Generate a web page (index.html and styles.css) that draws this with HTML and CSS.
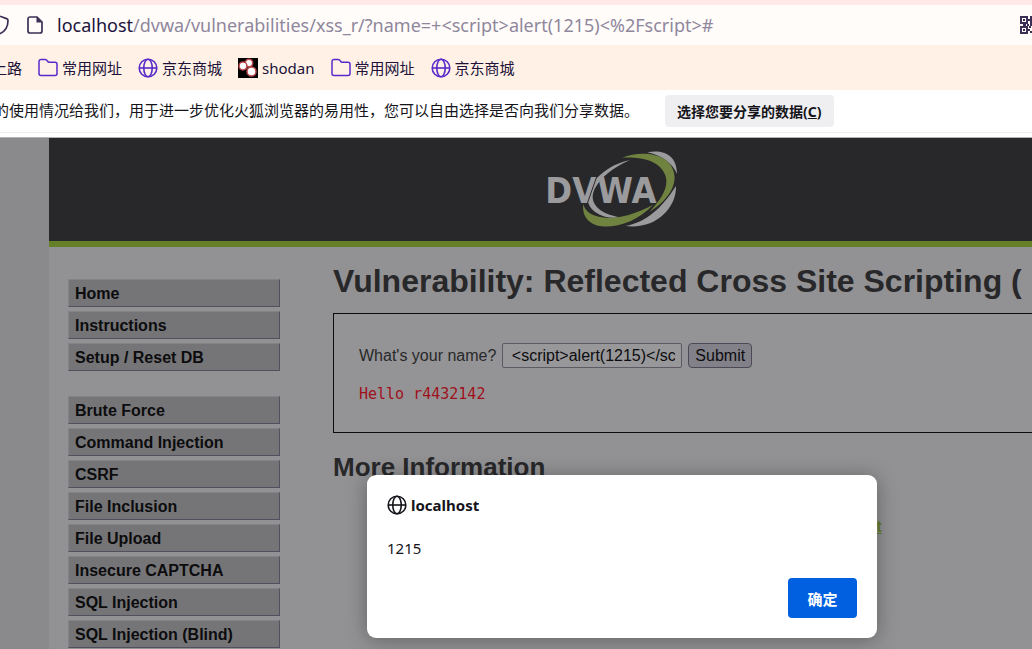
FILE: index.html
```html
<!DOCTYPE html>
<html lang="zh-CN">
<head>
  <meta charset="UTF-8" />
  <meta name="viewport" content="width=device-width, initial-scale=1" />
  <title>Vulnerability: Reflected Cross Site Scripting (XSS)</title>
  <link rel="stylesheet" href="styles.css">
</head>
<body>
<!-- shared icons -->
<svg class="defs" aria-hidden="true">
  <symbol id="globe" viewBox="0 0 20 20">
    <g fill="none" stroke="currentColor" stroke-width="1.6">
      <circle cx="10" cy="10" r="8.8"/>
      <ellipse cx="10" cy="10" rx="4.2" ry="8.8"/>
      <path d="M1.2 10h17.6"/>
    </g>
  </symbol>
  <symbol id="folder" viewBox="0 0 20 20">
    <path d="M1 15.5v-12a2 2 0 0 1 2-2h4.2c1 0 1.6.5 2 1.2l.5.8c.3.5.8.8 1.5.8H17a2 2 0 0 1 2 2v9.2a2 2 0 0 1-2 2H3a2 2 0 0 1-2-2z" fill="none" stroke="currentColor" stroke-width="1.5"/>
  </symbol>
</svg>

<header class="browser">
  <div class="tabstrip"></div>
  <div class="urlbar">
    <svg class="shield" viewBox="0 0 9 20"><path d="M0 1.2L6.5 3.6c1 .4 1.5 1 1.5 2C8 12 5 16.5 0 18.8" fill="none" stroke="currentColor" stroke-width="1.7"/></svg>
    <svg class="doc" viewBox="0 0 16 18">
      <path d="M3 1h7l5 5v9a2 2 0 0 1-2 2H3a2 2 0 0 1-2-2V3a2 2 0 0 1 2-2z" fill="none" stroke="currentColor" stroke-width="1.7"/>
      <path d="M9.5 1v5.5H15z" fill="currentColor"/>
    </svg>
    <div class="url"><b>localhost</b>/dvwa/vulnerabilities/xss_r/?name=+&lt;script&gt;alert(1215)&lt;%2Fscript&gt;#</div>
    <svg class="qr" viewBox="0 0 12 18">
      <g fill="none" stroke="currentColor" stroke-width="2">
        <rect x="1" y="1" width="6" height="6"/>
        <rect x="1" y="11" width="6" height="6"/>
        <rect x="11" y="1" width="6" height="6"/>
      </g>
      <path d="M3 3h2v2H3zM3 13h2v2H3zM8 3h2v2H8zM3 8h3v2H3zM7 8h2v2H7zM10 8h2v2h-2zM9 10h2v2H9zM8 13h2v2H8zM10 15h2v2h-2z" fill="currentColor"/>
    </svg>
  </div>
  <nav class="bookmarks">
    <a href="#">上路</a>
    <a href="#"><svg><use href="#folder"/></svg>常用网址</a>
    <a href="#"><svg><use href="#globe"/></svg>京东商城</a>
    <a href="#"><svg viewBox="0 0 20 20">
      <path d="M0 0h20v20H0z" fill="#000"/>
      <g fill="#fff" stroke="#b8484e" stroke-width="1.5">
        <circle cx="11" cy="5" r="3.7"/>
        <circle cx="5" cy="8" r="3.9"/>
        <circle cx="13.5" cy="13.5" r="4.5"/>
      </g>
    </svg>shodan</a>
    <a href="#"><svg><use href="#folder"/></svg>常用网址</a>
    <a href="#"><svg><use href="#globe"/></svg>京东商城</a>
  </nav>
  <div class="notice">
    <span>的使用情况给我们，用于进一步优化火狐浏览器的易用性，您可以自由选择是否向我们分享数据。</span>
    <button type="button">选择您要分享的数据(<u>C</u>)</button>
  </div>
</header>

<div class="viewport">
  <div class="page">
    <div class="banner">
      <svg class="logo" viewBox="45 40 402 234" role="img" aria-label="DVWA">
        <path d="M352 47C400 38 441 55 441 112C428 82 400 58 352 47z" fill="#9b9b9d"/>
        <path d="M438 148C440 215 375 280 286 268C350 256 395 215 438 148z" fill="#9b9b9d"/>
        <path d="M300 71C235 82 176 135 172 180C171 220 215 250 273 242C225 236 186 212 188 178C192 140 240 95 300 71z" fill="#9b9b9d"/>
        <text x="46" y="199">DVWA</text>
        <path d="M203 112L172 200" stroke="#28282a" stroke-width="3"/>
        <path d="M276 63C340 38 434 50 434 125C432 165 400 200 358 226C395 188 418 150 406 116C390 74 340 60 276 63z" fill="#6f8240"/>
        <path d="M160 202C168 245 250 268 370 204C325 252 262 274 215 269C178 264 155 240 160 202z" fill="#6f8240"/>
      </svg>
    </div>
    <div class="columns">
      <nav class="menu">
        <ul>
          <li><a href="#">Home</a></li>
          <li><a href="#">Instructions</a></li>
          <li><a href="#">Setup / Reset DB</a></li>
        </ul>
        <ul>
          <li><a href="#">Brute Force</a></li>
          <li><a href="#">Command Injection</a></li>
          <li><a href="#">CSRF</a></li>
          <li><a href="#">File Inclusion</a></li>
          <li><a href="#">File Upload</a></li>
          <li><a href="#">Insecure CAPTCHA</a></li>
          <li><a href="#">SQL Injection</a></li>
          <li><a href="#">SQL Injection (Blind)</a></li>
        </ul>
      </nav>
      <main>
        <h1>Vulnerability: Reflected Cross Site Scripting (</h1>
        <div class="vulnerable">
          <form>
            <label for="name">What's your name?</label>
            <input type="text" id="name" value=" &lt;script&gt;alert(1215)&lt;/script&gt;">
            <button type="button">Submit</button>
          </form>
          <pre>Hello r4432142</pre>
        </div>
        <h2>More Information</h2>
        <ul class="links">
          <li><a href="#">https://owasp.org/www-community/xss-filter-evasion-cheatsheet</a></li>
        </ul>
      </main>
    </div>
  </div>
  <div class="dialog" role="alertdialog" aria-labelledby="origin">
    <div class="origin" id="origin"><svg><use href="#globe"/></svg>localhost</div>
    <p>1215</p>
    <button type="button">确定</button>
  </div>
</div>
</body>
</html>
```
FILE: styles.css
```css
* {
  box-sizing: border-box;
}
body {
  margin: 0;
  height: 100vh;
  display: flex;
  flex-direction: column;
  overflow: hidden;
  font-family: "Noto Sans", "Noto Sans CJK SC", sans-serif;
  font-size: 15px;
  color: #15141a;
}
svg {
  display: block;
  flex: none;
}
.defs {
  display: none;
}

/* browser chrome */
.browser {
  flex: none;
  white-space: nowrap;
}
.tabstrip {
  height: 5px;
  background-color: #ffe8e7;
}
.urlbar {
  display: flex;
  align-items: center;
  height: 40px;
  background-color: #fffcfa;
  color: #3b2f54;
}
.shield {
  width: 9px;
  height: 20px;
}
.doc {
  width: 16px;
  height: 18px;
  margin-left: 18px;
}
.url {
  flex: 1;
  margin-left: 14px;
  font-family: "Noto Sans", sans-serif;
  font-size: 18px;
  color: #8f879c;
}
.url b {
  font-weight: normal;
  color: #20123a;
}
.qr {
  width: 12px;
  height: 18px;
}
.bookmarks {
  display: flex;
  align-items: center;
  gap: 16px;
  height: 45px;
  background-color: #fff1e5;
}
.bookmarks a {
  display: flex;
  align-items: center;
  gap: 4px;
  color: #20123a;
  line-height: 20px;
  text-decoration: none;
}
.bookmarks a:first-child {
  margin-left: -8px;
}
.bookmarks svg {
  width: 20px;
  height: 20px;
  color: #592acb;
}
.notice {
  display: flex;
  align-items: center;
  gap: 26px;
  height: 43px;
  background-color: #fff;
  border-bottom: 1px solid #ececee;
}
.notice span {
  margin-left: -6px;
  padding-bottom: 2px;
  line-height: 20px;
}
.notice button {
  height: 32px;
  padding: 0 12px;
  border: 0;
  border-radius: 4px;
  background-color: #efeff1;
  color: #15141a;
  font: bold 14px "Noto Sans", "Noto Sans CJK SC", sans-serif;
}

/* page, dimmed behind the dialog */
.viewport {
  flex: 1;
  position: relative;
  margin-top: 4px;
  padding-left: 49px;
  overflow: hidden;
  border-top: 1px solid #b0b3b8;
  background-color: #8a8a8c;
  font-family: "Liberation Sans", Arial, sans-serif;
}
.page {
  min-height: 100%;
  background-color: #929294;
  font-size: 16px;
  color: #28282a;
}
.banner {
  display: flex;
  justify-content: center;
  padding: 12px 0 13px 142px;
  background-color: #28282a;
  border-bottom: 6px solid #66802a;
}
.logo {
  width: 134px;
  height: 78px;
}
.logo text {
  font: bold 108px "DejaVu Sans Condensed", sans-serif;
  fill: #9b9b9d;
}
.columns {
  display: flex;
  gap: 53px;
  padding-left: 19px;
}
.menu {
  flex: none;
  width: 212px;
  padding-top: 32px;
}
.menu ul {
  display: grid;
  gap: 4px;
  margin: 0 0 25px;
  padding: 0;
  list-style: none;
}
.menu a {
  display: block;
  padding: 2px 6px 0;
  border: 1px solid #838385;
  border-right-color: #50505e;
  border-bottom-color: #50505e;
  background-color: #757577;
  color: #0c0c0e;
  font-weight: bold;
  line-height: 24px;
  text-decoration: none;
}
main {
  flex: 1;
  min-width: 0;
  white-space: nowrap;
}
h1 {
  margin: 14px 0 11px;
  font-size: 32px;
  line-height: 41px;
}
.vulnerable {
  height: 120px;
  padding: 29px 25px;
  border: 1px solid #0c0c0e;
  border-right: 0;
  background-color: #949496;
}
form {
  display: flex;
  align-items: center;
  gap: 6px;
}
form label {
  line-height: 25px;
}
form input {
  width: 180px;
  height: 25px;
  padding: 0 6px 0 4px;
  border: 1px solid #5c5b63;
  border-radius: 2px;
  background-color: #98989a;
  color: #0c0c0e;
  font: 16px "Liberation Sans", Arial, sans-serif;
}
form button {
  height: 25px;
  padding: 0 6px;
  border: 1px solid #4a4955;
  border-radius: 4px;
  background-color: #828088;
  color: #0c0c0e;
  font: 16px "Liberation Sans", Arial, sans-serif;
}
pre {
  margin: 16px 0 0;
  color: #a0101c;
  font: 15px/20px "DejaVu Sans Mono", monospace;
}
h2 {
  margin: 18px 0 0;
  font-size: 26px;
  line-height: 32px;
}
.links {
  margin: 34px 0 0;
  padding-left: 58px;
  list-style: none;
  line-height: 20px;
}
.links a {
  color: #66802a;
  font-weight: bold;
}

/* alert */
.dialog {
  position: absolute;
  top: 337px;
  left: 367px;
  width: 510px;
  display: flex;
  flex-direction: column;
  padding: 20px;
  border-radius: 9px;
  background-color: #fff;
  box-shadow: 0 2px 20px rgba(12, 12, 13, 0.35);
  font-family: "Noto Sans", "Noto Sans CJK SC", sans-serif;
}
.origin {
  display: flex;
  align-items: center;
  gap: 4px;
  font-weight: bold;
  line-height: 20px;
}
.origin svg {
  width: 20px;
  height: 20px;
}
.dialog p {
  margin: 23px 0 20px;
  line-height: 20px;
}
.dialog button {
  align-self: flex-end;
  width: 69px;
  height: 40px;
  border: 0;
  border-radius: 4px;
  background-color: #0060df;
  color: #fff;
  font: bold 15px "Noto Sans CJK SC", sans-serif;
}
```
